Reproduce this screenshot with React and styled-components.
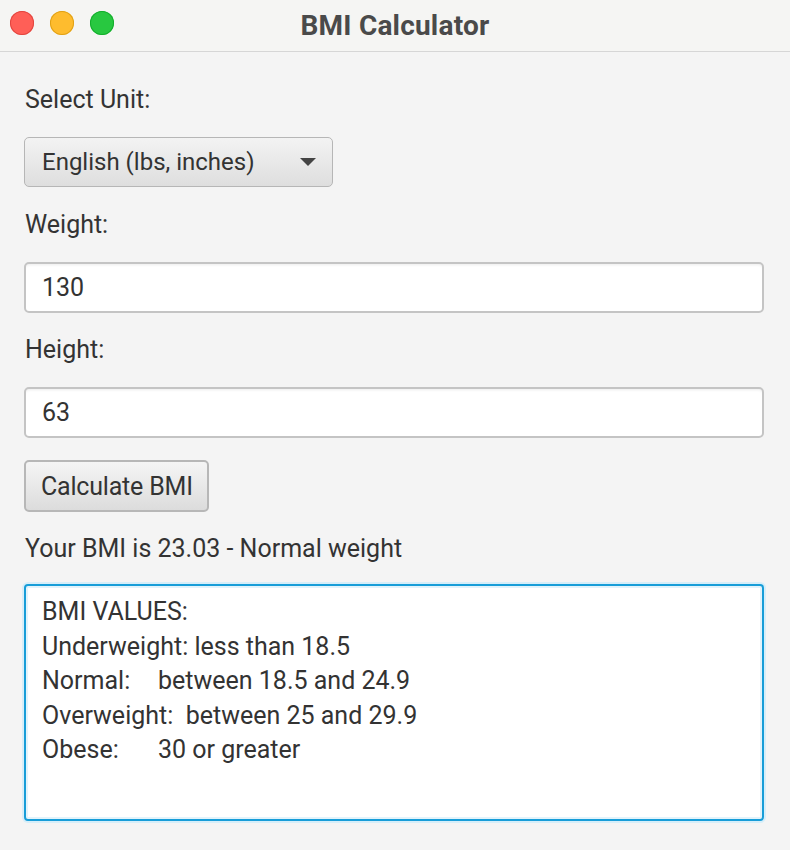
import React from 'react';
import styled, { createGlobalStyle } from 'styled-components';

const GlobalStyle = createGlobalStyle`
  html, body {
    margin: 0;
    padding: 0;
    background: #f4f4f4;
  }
  body {
    font-family: Roboto, "Liberation Sans", sans-serif;
    color: #333;
  }
`;

const Window = styled.div`
  width: 790px;
  height: 850px;
  background: #f4f4f4;
  display: flex;
  flex-direction: column;
  overflow: hidden;
`;

const TitleBar = styled.div`
  position: relative;
  height: 51px;
  border-bottom: 1px solid #d6d6d6;
  background: #f5f5f3;
  display: flex;
  align-items: center;
  justify-content: center;
`;

const Lights = styled.div`
  position: absolute;
  left: 10px;
  top: 11px;
  display: flex;
  gap: 16px;
`;

const Light = styled.span`
  width: 24px;
  height: 24px;
  border-radius: 50%;
  background: ${p => p.color};
  box-shadow: inset 0 0 0 1px ${p => p.edge};
`;

const Title = styled.h1`
  margin: 0;
  font-size: 28px;
  font-weight: 700;
  color: #4a4a4a;
  letter-spacing: 0.2px;
`;

const Content = styled.div`
  display: flex;
  flex-direction: column;
  align-items: flex-start;
  gap: 24px;
  padding: 35px 26px 0 24px;
`;

const Label = styled.div`
  font-size: 25px;
  line-height: 26px;
  height: 26px;
  color: #333;
  padding-left: 1px;
  margin-top: ${p => p.$shift || 0}px;
`;

const Select = styled.div`
  box-sizing: border-box;
  width: 309px;
  height: 50px;
  border: 1px solid #b6b6b6;
  border-radius: 5px;
  background: linear-gradient(#f3f3f3, #dedede);
  display: flex;
  align-items: center;
  justify-content: space-between;
  padding: 0 16px 0 17px;
  font-size: 24px;
  color: #333;
`;

const Arrow = styled.span`
  width: 0;
  height: 0;
  border-left: 8.5px solid transparent;
  border-right: 8.5px solid transparent;
  border-top: 8px solid #444;
`;

const Input = styled.div`
  box-sizing: border-box;
  width: 740px;
  height: 51px;
  border: 2px solid #c4c4c4;
  border-radius: 5px;
  background: #fff;
  box-shadow: inset 0 3px 3px -2px rgba(0, 0, 0, 0.08);
  display: flex;
  align-items: center;
  padding: 0 16px;
  font-size: 25px;
  color: #333;
`;

const Button = styled.button`
  box-sizing: border-box;
  height: 52px;
  margin-top: -2px;
  padding: 0 14px 0 15px;
  border: 2px solid #b7b7b7;
  border-radius: 5px;
  background: linear-gradient(#f5f5f5, #dcdcdc);
  font-family: inherit;
  font-size: 25px;
  letter-spacing: -0.2px;
  color: #333;
`;

const Result = styled.div`
  font-size: 25px;
  line-height: 26px;
  color: #333;
  padding-left: 1px;
`;

const TextArea = styled.div`
  box-sizing: border-box;
  width: 740px;
  height: 237px;
  margin-top: -2px;
  border: 2px solid #179dd8;
  border-radius: 4px;
  background: #fff;
  box-shadow: 0 0 0 2px #d6eef9, inset 0 0 0 2px #e2f3fb;
  padding: 9px 16px 6px;
  font-size: 25px;
  line-height: 34.5px;
  white-space: pre;
  tab-size: 116px;
  color: #333;
`;

const bmiText = [
  'BMI VALUES:',
  'Underweight: less than 18.5',
  'Normal:\tbetween 18.5 and 24.9',
  'Overweight:  between 25 and 29.9',
  'Obese:\t30 or greater',
].join('\n');

export default function App() {
  return (
    <Window>
      <GlobalStyle />
      <TitleBar>
        <Lights>
          <Light color="#ff5f57" edge="#e2463f" />
          <Light color="#febc2e" edge="#e1a116" />
          <Light color="#28c840" edge="#14ae2c" />
        </Lights>
        <Title>BMI Calculator</Title>
      </TitleBar>
      <Content>
        <Label>Select Unit:</Label>
        <Select>
          <span>English (lbs, inches)</span>
          <Arrow />
        </Select>
        <Label $shift={1}>Weight:</Label>
        <Input>130</Input>
        <Label>Height:</Label>
        <Input>63</Input>
        <Button>Calculate BMI</Button>
        <Result>Your BMI is 23.03 - Normal weight</Result>
        <TextArea>{bmiText}</TextArea>
      </Content>
    </Window>
  );
}
